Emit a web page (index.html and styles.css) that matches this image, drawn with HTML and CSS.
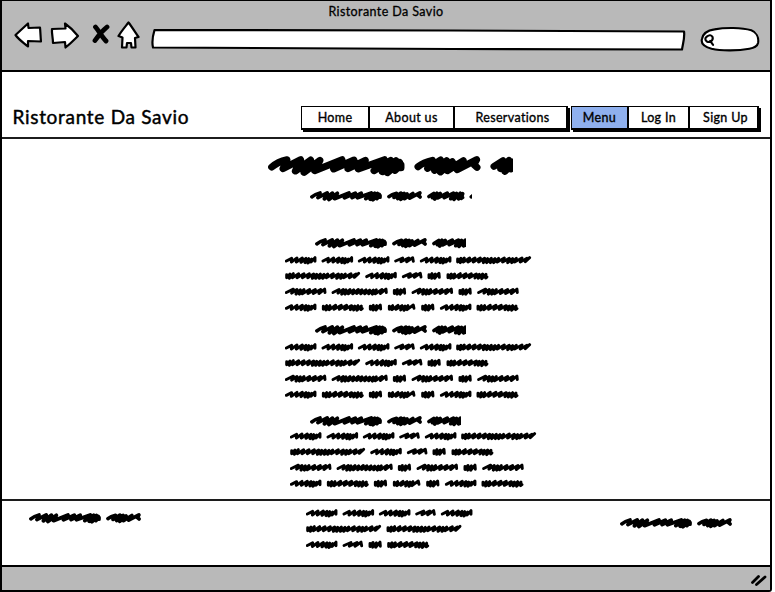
FILE: index.html
```html
<!DOCTYPE html>
<html lang="en">
<head>
<meta charset="utf-8">
<title>Ristorante Da Savio</title>
<link rel="stylesheet" href="styles.css">
</head>
<body>
<svg class="defs" aria-hidden="true">
  <defs>
    <!-- body words, drawn at three units per pixel -->
    <path id="w4" d="M4 15L20 7 19 18 36 6 34 18 52 6 48 19 63 7 60 20 71 8 69 21 80 9 78 18 90 5 90 16"/>
    <path id="w3" d="M4 15L25 6 20 17 43 6 37 17 55 5 57 16"/>
    <path id="w9" d="M5 9V18L15 7 13 20 25 6 22 18 41 6 36 18 57 6 52 18 73 6 68 18 86 7 82 20 95 8 92 20 106 7 103 20 117 8 113 20 128 7 124 18 145 6 140 18 160 7 155 20 170 8 167 20 181 7 176 18 198 6 193 18 213 7 208 17 221 5"/>
    <path id="w2" d="M5 9V18L14 6 13 20 24 7 22 20 35 5 36 17"/>
    <path id="w7" d="M5 9V18L15 7 13 20 25 7 22 19 42 6 37 18 59 6 53 18 75 6 69 18 90 7 86 19 99 8 96 20 109 7 106 21 119 8 118 19 122 16"/>
    <path id="w6" d="M4 15L25 5 20 17 36 6 33 20 46 7 43 20 57 6 52 19 74 6 69 18 91 6 85 18 107 6 102 18 119 5 120 15"/>
    <path id="w8" d="M4 15L22 6 19 17 35 6 30 20 43 7 40 20 55 6 50 19 66 7 63 19 80 6 75 18 91 7 87 19 103 7 99 19 114 8 111 19 125 8 122 20 134 7 131 19 151 6 146 18 163 5 164 15"/>
    <path id="w5" d="M5 9V18L15 7 13 19 31 6 25 18 43 7 39 20 52 8 49 21 61 7 58 19 77 5 79 15"/>
    <!-- heading words, drawn larger and scaled down -->
    <path id="h1" d="M11 33Q30 17 57 11L45 38 98 11 82 45 128 12 108 49 156 13 140 44 222 11 197 39 258 12 240 38 292 13 271 39 349 11 318 44 368 13 343 47 384 14 358 50 395 19 381 43 399 26 399 35"/>
    <path id="h2" d="M11 32Q28 18 54 13L40 37 79 12 61 43 97 14 78 48 114 17 99 44 147 14 129 41 187 11 179 26 188 34"/>
    <path id="h3" d="M11 31L38 14 31 38 56 13 44 46 75 14 61 39 115 12 98 38 150 13 135 44 168 14 153 48 189 13 180 45 203 15 194 42 202 37"/>
    <g id="h-line" class="ink-heading" transform="scale(.1755)">
      <use href="#h1"/><use href="#h2" x="439"/><use href="#h3" x="667"/><use href="#h1" x="908"/>
    </g>
    <g id="paragraph" class="ink">
      <use href="#w4"/><use href="#w4" x="110"/><use href="#w4" x="219"/><use href="#w3" x="328"/><use href="#w4" x="405"/><use href="#w9" x="513"/>
      <use href="#w9" y="47"/><use href="#w4" x="241" y="47"/><use href="#w3" x="351" y="47"/><use href="#w2" x="427" y="47"/><use href="#w7" x="484" y="47"/>
      <use href="#w6" y="94.5"/><use href="#w8" x="140" y="94.5"/><use href="#w2" x="323" y="94.5"/><use href="#w6" x="380" y="94.5"/><use href="#w2" x="520" y="94.5"/><use href="#w6" x="577" y="94.5"/>
      <use href="#w4" y="142"/><use href="#w7" x="110" y="142"/><use href="#w2" x="251" y="142"/><use href="#w5" x="308" y="142"/><use href="#w2" x="408" y="142"/><use href="#w4" x="465" y="142"/><use href="#w7" x="574" y="142"/>
    </g>
  </defs>
</svg>

<div class="window">
  <header class="chrome">
    <div class="window-title">Ristorante Da Savio</div>
    <div class="toolbar">
      <svg class="tool back" viewBox="0 0 28 26"><path d="M1.500 13L14 1.500 14.500 6 26 5.500C26.500 10 26.500 15 27 19.500L14 19V24.500C10 21 5 18 1.500 13Z"/></svg>
      <svg class="tool forward" viewBox="0 0 30 28"><path d="M2 7L15.500 6.500 15 1.500C20 5 24 9 28 14 24 18 20 22 15.500 25.500L15 20 3 21C3 16 1.500 11 2 7Z"/></svg>
      <svg class="stop" viewBox="0 0 18 20"><path d="M3.500 3C7 7 10 13 14 17M15 3C10 7 6 12 3 16.500"/></svg>
      <svg class="tool home" viewBox="0 0 24 29"><path d="M11.500 1.500C15 6 18 11 21.500 16L18 17 18.500 26.500H14.500L14 22 10 22 9.500 26.500H5L5.500 16.500 1.500 15C4.500 10 8 6 11.500 1.500Z"/></svg>
      <svg class="address" viewBox="0 0 536 24"><path d="M3.500 2C100 2.500 200 2 300 2.500L533 3.500C534 9 532 15 531 21.500L300 21 2 19.500C.7 14 2 7 3.500 2Z"/></svg>
      <svg class="search" viewBox="0 0 62 28"><path d="M15 3C26 1 43 1 53 4 58 6 61 11 60 17 59 21 56 22 51 23 38 25.500 21 25 12 23 4 21 1 17 2 13 3 7 8 4 15 3Z"/><path class="lens" d="M7 10.500Q11 7.500 13 11C14 15 10 17 7 15.500 5 14 5 12 7 10.500M10.500 15L13.500 19"/></svg>
    </div>
  </header>

  <div class="site-header">
    <h1 class="brand">Ristorante Da Savio</h1>
    <nav class="nav">
      <div class="tabs primary"><a class="tab">Home</a><a class="tab">About us</a><a class="tab">Reservations</a></div>
      <div class="tabs account"><a class="tab active">Menu</a><a class="tab">Log In</a><a class="tab">Sign Up</a></div>
    </nav>
  </div>

  <main class="content">
    <svg class="title" viewBox="0 0 129 11"><use href="#h-line"/></svg>
    <svg class="subtitle" viewBox="0 0 162 11"><use href="#h-line"/></svg>
    <section class="course first">
      <svg class="heading" viewBox="0 0 150.500 11"><use href="#h-line"/></svg>
      <svg class="text" viewBox="0 0 742 168"><use href="#paragraph"/></svg>
    </section>
    <section class="course second">
      <svg class="heading" viewBox="0 0 150.500 11"><use href="#h-line"/></svg>
      <svg class="text" viewBox="0 0 742 168"><use href="#paragraph"/></svg>
    </section>
    <section class="course third">
      <svg class="heading" viewBox="0 0 150.500 11"><use href="#h-line"/></svg>
      <svg class="text" viewBox="0 0 742 168"><use href="#paragraph"/></svg>
    </section>
  </main>

  <footer class="footer">
    <svg class="foot-word left" viewBox="0 0 114 11"><use href="#h-line"/></svg>
    <svg class="foot-text" viewBox="0 0 504 120"><g class="ink">
      <use href="#w4"/><use href="#w4" x="110"/><use href="#w4" x="219"/><use href="#w3" x="328"/><use href="#w4" x="405"/>
      <use href="#w9" y="47"/><use href="#w9" x="241" y="47"/>
      <use href="#w4" y="94.500"/><use href="#w3" x="110" y="94.500"/><use href="#w2" x="187" y="94.500"/><use href="#w7" x="243" y="94.500"/>
    </g></svg>
    <svg class="foot-word right" viewBox="0 0 114 11"><use href="#h-line"/></svg>
  </footer>

  <div class="status"><svg class="grip" viewBox="0 0 18 14"><path d="M2.500 9.500L8.500 3.500M6.500 11.500L15 4"/></svg></div>
</div>
</body>
</html>
```
FILE: styles.css
```css
* { box-sizing: border-box; }
body {
  margin: 0;
  background: #fff;
  color: #000;
  font-family: Lato, "Open Sans", sans-serif;
  font-variant-ligatures: none;
}
svg { display: block; flex: none; }
.defs { position: absolute; width: 0; height: 0; }
.window {
  display: flex;
  flex-direction: column;
  width: 772px;
  height: 592px;
  border: 2px solid #000;
  border-width: 1px 2px 2px 2.500px;
  border-bottom-right-radius: 3px;
}

.chrome {
  height: 71px;
  flex: none;
  background: #b9b9b9;
  border-bottom: 2px solid #000;
}
.window-title {
  height: 20px;
  line-height: 21px;
  font-size: 12.500px;
  letter-spacing: .4px;
  text-align: center;
  -webkit-text-stroke: .3px #000;
}
.toolbar { display: flex; align-items: flex-start; padding-left: 12px; }
.toolbar path { fill: #fff; stroke: #000; stroke-width: 2.200; stroke-linejoin: round; stroke-linecap: round; }
.back { width: 28px; height: 26px; margin-top: 1px; }
.forward { width: 30px; height: 28px; margin: 1px 0 0 8px; }
.stop { width: 18px; height: 20px; margin: 3px 0 0 12px; }
.toolbar .stop path { fill: none; stroke-width: 4.800; }
.home { width: 24px; height: 29px; margin: 0 0 0 7px; }
.address { width: 536px; height: 24px; margin: 7px 0 0 10px; }
.search { width: 60px; height: 28px; margin: 5px 0 0 13px; }
.toolbar .lens { fill: none; }

.site-header {
  display: flex;
  height: 67px;
  flex: none;
  border-bottom: 2px solid #1c1c1c;
}
.brand {
  width: 299px;
  margin: 33px 0 0;
  padding-left: 10.500px;
  font-size: 19px;
  font-weight: 400;
  line-height: 24px;
  letter-spacing: .7px;
  -webkit-text-stroke: .45px #000;
  white-space: nowrap;
}
.nav { display: flex; gap: 3px; margin-top: 34px; }
.tabs {
  display: grid;
  height: 24px;
  border: 2px solid #000;
  border-width: 1.500px 2px 2px 1.500px;
  box-shadow: 2px 2px 0 #000;
}
.primary { width: 267px; grid-template-columns: 66px 85px 1fr; }
.account { width: 188px; grid-template-columns: 55px 61px 1fr; }
.tab {
  font-size: 12.500px;
  line-height: 21px;
  letter-spacing: .35px;
  text-align: center;
  background: #fff;
  white-space: nowrap;
  -webkit-text-stroke: .35px #000;
}
.tab + .tab { border-left: 2px solid #000; }
.primary .tab:last-child { padding-left: 4px; }
.account .tab:last-child { padding-left: 4px; }
.tab.active { background: #8fb0ee; }

.ink, .ink-heading { fill: none; stroke: #000; stroke-linecap: round; stroke-linejoin: round; }
.ink { stroke-width: 8.800; }
.ink-heading { stroke-width: 21; }

.content { flex: none; height: 362px; padding-top: 17px; border-bottom: 2px solid #1c1c1c; }
.title { width: 245px; height: 21px; margin-left: 266px; }
.subtitle { width: 162px; height: 11px; margin: 14px 0 36px 308px; }
.heading { width: 150.500px; height: 11px; margin-left: 313px; }
.text { width: 247.300px; height: 56px; margin: 7px 0 0 283px; }
.second { margin-top: 13px; }
.third { margin-top: 17px; }
.third .heading { margin-left: 308px; }
.third .text { margin-top: 5px; margin-left: 288px; }

.footer { display: flex; align-items: flex-start; height: 64px; flex: none; }
.foot-word { width: 114px; height: 11px; }
.left { margin: 12px 0 0 27px; }
.foot-text { width: 168px; height: 40px; margin: 8px 0 0 162.500px; }
.right { margin: 17px 0 0 146px; }

.status {
  display: flex;
  justify-content: flex-end;
  flex: 1;
  background: #b9b9b9;
  border-top: 2px solid #000;
}
.grip { width: 18px; height: 14px; margin: 6px 2px 0 0; }
.grip path { fill: none; stroke: #000; stroke-width: 2.800; stroke-linecap: round; }
```
